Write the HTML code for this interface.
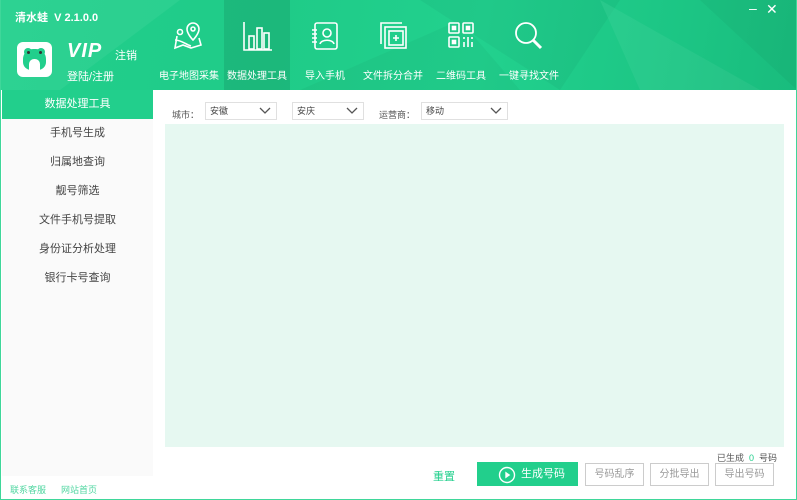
<!DOCTYPE html>
<html><head><meta charset="utf-8"><style>
*{margin:0;padding:0;box-sizing:border-box}
body{width:797px;height:500px;overflow:hidden;font-family:"Liberation Sans","Noto Sans CJK SC",sans-serif;background:#fff;position:relative}
.win{position:absolute;left:0;top:0;width:797px;height:500px;border:1px solid #3fd79a;border-top:none}
.hdr{position:absolute;left:0;top:0;width:797px;height:90px;background:linear-gradient(100deg,#22cf8c 0%,#1fcb88 35%,#22d18e 60%,#1cc584 85%,#19bc7d 100%);overflow:hidden}
.tri{position:absolute;opacity:.12}
.title{position:absolute;left:15px;top:9px;color:#fff;font-size:11px;font-weight:bold}
.logo{position:absolute;left:17px;top:42px;width:35px;height:35px;background:#fff;border-radius:6px}
.vip{position:absolute;left:67px;top:40px;color:#fff;font-size:20px;font-weight:bold;font-style:italic;letter-spacing:1px}
.zx{position:absolute;left:115px;top:47px;color:#fff;font-size:11px}
.dl{position:absolute;left:67px;top:68px;color:#fff;font-size:11px}
.tab{position:absolute;top:0;height:90px;color:#fff;font-size:10px;text-align:center}
.tab svg{position:absolute;top:20px}
.tab span{position:absolute;top:67px;left:0;width:100%;white-space:nowrap}
.ctl{position:absolute;top:3px;color:#fff;font-size:14px}
.side{position:absolute;left:2px;top:90px;width:151px;height:386px;background:#fafafa}
.side div{height:29px;line-height:29px;text-align:center;font-size:11px;color:#444}
.side .act{background:#22cf8c;color:#fff}
.lab{position:absolute;font-size:9px;color:#555;top:108px}
.sel{position:absolute;top:102px;height:18px;border:1px solid #e0e0e0;background:#fff;font-size:9px;color:#444;line-height:16px;padding-left:4px}
.sel svg{position:absolute;right:5px;top:4px}
.panel{position:absolute;left:165px;top:124px;width:619px;height:323px;background:#e6f8f1}
.btn{position:absolute;top:463px;height:23px;border:1px solid #ccc;background:#fff;color:#999;font-size:10px;text-align:center;line-height:21px}
.foot{position:absolute;top:483px;font-size:9px;color:#4fd6a0}
</style></head><body>
<div class="hdr">
<svg class="tri" style="left:0;top:0" width="797" height="90"><polygon points="0,0 180,0 60,90 0,90" fill="#fff" opacity=".4"/><polygon points="420,0 620,0 560,90" fill="#000" opacity=".3"/><polygon points="600,0 760,90 640,90" fill="#fff" opacity=".4"/><polygon points="300,90 460,20 520,90" fill="#000" opacity=".25"/><polygon points="700,0 797,0 797,90" fill="#000" opacity=".3"/></svg>
<div class="title">清水蛙&nbsp;&nbsp;V 2.1.0.0</div>
<div class="logo">
 <div style="position:absolute;left:6px;top:7px;width:23px;height:21px;background:#22cf8c;border-radius:10px 10px 8px 8px"></div>
 <div style="position:absolute;left:7px;top:6px;width:8px;height:8px;background:#22cf8c;border-radius:50%"></div>
 <div style="position:absolute;left:20px;top:6px;width:8px;height:8px;background:#22cf8c;border-radius:50%"></div>
 <div style="position:absolute;left:10px;top:9px;width:3px;height:3px;background:#333;border-radius:50%"></div>
 <div style="position:absolute;left:22px;top:9px;width:3px;height:3px;background:#333;border-radius:50%"></div>
 <div style="position:absolute;left:12px;top:17px;width:11px;height:11px;background:#fff;border-radius:5px 5px 0 0"></div>
</div>
<div class="vip">VIP</div><div class="zx">注销</div><div class="dl">登陆/注册</div>
<div class="tab" style="left:156px;width:66px"><svg style="left:17px" width="32" height="32" viewBox="0 0 32 32" fill="none" stroke="#fff" stroke-width="1.6"><path d="M20 3a6 6 0 0 1 6 6c0 5-6 11-6 11s-6-6-6-11a6 6 0 0 1 6-6z"/><circle cx="20" cy="9" r="2"/><circle cx="7" cy="12" r="2.5"/><path d="M4 16l-2 12 8-3 8 3 10-3-2-7M2 20c6 0 10 4 16 6"/></svg><span>电子地图采集</span></div>
<div class="tab" style="left:224px;width:66px;background:rgba(0,0,0,.09)"><svg style="left:17px" width="32" height="32" viewBox="0 0 32 32" fill="none" stroke="#fff" stroke-width="1.6"><path d="M3 2v28h28"/><rect x="8" y="16" width="5" height="13"/><rect x="16" y="8" width="5" height="21"/><rect x="23" y="13" width="5" height="16"/></svg><span>数据处理工具</span></div>
<div class="tab" style="left:292px;width:66px"><svg style="left:17px" width="32" height="32" viewBox="0 0 32 32" fill="none" stroke="#fff" stroke-width="1.6"><rect x="6" y="3" width="22" height="26" rx="2"/><path d="M3 10h5M3 14h5M3 18h5M3 22h5"/><circle cx="18" cy="13" r="4"/><path d="M11 24c1-5 13-5 14 0"/></svg><span>导入手机</span></div>
<div class="tab" style="left:360px;width:66px"><svg style="left:17px" width="32" height="32" viewBox="0 0 32 32" fill="none" stroke="#fff" stroke-width="1.6"><path d="M4 24V3h21"/><rect x="8" y="7" width="21" height="21"/><rect x="12" y="11" width="14" height="14"/><path d="M19 15v6M16 18h6"/></svg><span>文件拆分合并</span></div>
<div class="tab" style="left:428px;width:66px"><svg style="left:17px" width="32" height="32" viewBox="0 0 32 32" fill="none" stroke="#fff" stroke-width="1.6"><rect x="4" y="3" width="10" height="10" rx="1"/><rect x="18" y="3" width="10" height="10" rx="1"/><rect x="4" y="17" width="10" height="10" rx="1"/><rect x="7.5" y="6.5" width="3" height="3" fill="#fff"/><rect x="21.5" y="6.5" width="3" height="3" fill="#fff"/><rect x="7.5" y="20.5" width="3" height="3" fill="#fff"/><path d="M19 17v2M19 22v5M23 17v10M27 17v2M27 22v5"/></svg><span>二维码工具</span></div>
<div class="tab" style="left:496px;width:66px"><svg style="left:17px" width="32" height="32" viewBox="0 0 32 32" fill="none" stroke="#fff" stroke-width="1.8"><circle cx="13" cy="13" r="10"/><path d="M20 20l8 8" stroke-width="3"/></svg><span>一键寻找文件</span></div>
<div class="ctl" style="left:749px;top:0">–</div><div class="ctl" style="left:766px;top:1px">✕</div>
</div>
<div class="side"><div class="act">数据处理工具</div><div>手机号生成</div><div>归属地查询</div><div>靓号筛选</div><div>文件手机号提取</div><div>身份证分析处理</div><div>银行卡号查询</div></div>
<div class="lab" style="left:172px">城市：</div>
<div class="sel" style="left:205px;width:72px">安徽<svg width="12" height="8"><path d="M1 1l5 5 5-5" stroke="#555" fill="none" stroke-width="1.3"/></svg></div>
<div class="sel" style="left:292px;width:72px">安庆<svg width="12" height="8"><path d="M1 1l5 5 5-5" stroke="#555" fill="none" stroke-width="1.3"/></svg></div>
<div class="lab" style="left:379px">运营商：</div>
<div class="sel" style="left:421px;width:87px">移动<svg width="12" height="8"><path d="M1 1l5 5 5-5" stroke="#555" fill="none" stroke-width="1.3"/></svg></div>
<div class="panel"></div>
<div style="position:absolute;left:717px;top:451px;font-size:9px;color:#555">已生成 <span style="color:#22cf8c">&nbsp;0&nbsp;</span> 号码</div>
<div style="position:absolute;left:433px;top:468px;font-size:11px;color:#22cf8c">重置</div>
<div class="btn" style="left:477px;width:101px;height:24px;top:462px;background:#22cf8c;border-color:#22cf8c;color:#fff;font-size:11px;line-height:22px;text-align:left;padding-left:43px">生成号码<svg style="position:absolute;left:20px;top:3px" width="18" height="18"><circle cx="9" cy="9" r="7.5" fill="none" stroke="#fff" stroke-width="1.4"/><path d="M7.3 5.5v7l5-3.5z" fill="#fff"/></svg></div>
<div class="btn" style="left:585px;width:59px">号码乱序</div>
<div class="btn" style="left:650px;width:59px">分批导出</div>
<div class="btn" style="left:715px;width:59px">导出号码</div>
<div class="foot" style="left:10px">联系客服</div><div class="foot" style="left:61px">网站首页</div>
<div class="win"></div>
</body></html>
